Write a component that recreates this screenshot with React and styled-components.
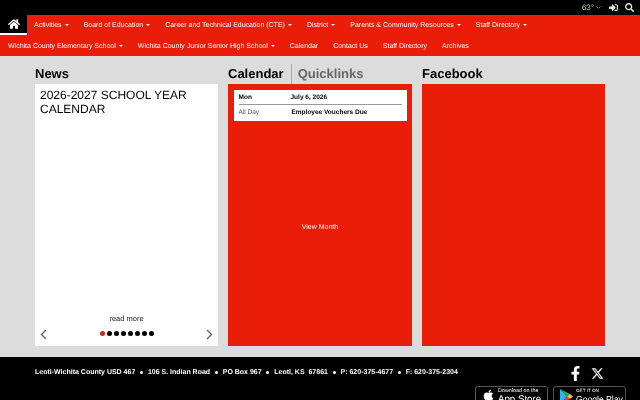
import React from "react";
import styled, { createGlobalStyle, css } from "styled-components";
import { FaHome, FaFacebookF, FaApple, FaSignInAlt, FaSearch } from "react-icons/fa";
import { FaXTwitter } from "react-icons/fa6";
import { LuChevronDown } from "react-icons/lu";

const Global = createGlobalStyle`
  html, body { margin: 0; padding: 0; width: 640px; height: 400px; overflow: hidden; background: #dcdcdc; }
  body { font-family: "Liberation Sans", Arial, sans-serif; text-rendering: geometricPrecision; }
`;
const RED = "#e91d08";
const softText = css`filter: blur(0.2px);`;
const Page = styled.div`width: 640px; height: 400px; overflow: hidden; display: flex; flex-direction: column;`;
const TopBar = styled.div`height: 15px; background: #000; color: #e4e4e4; display: flex; justify-content: flex-end; align-items: center; padding-right: 6px; gap: 7px; font-size: 8px; flex: none;`;
const Temp = styled.span`display: flex; align-items: center; gap: 1px; color: #ccc; ${softText}`;
const Nav = styled.nav`background: ${RED}; height: 41px; flex: none; display: flex; flex-direction: column;`;
const NavRow = styled.div`display: flex; align-items: center; height: ${p => p.$h}px; padding-left: ${p => p.$pad}px;`;
const Home = styled.div`width: 27px; height: 20px; background: #000; border-bottom: 2px solid #fff; box-sizing: border-box; color: #fff; display: flex; align-items: center; justify-content: center; font-size: 12px; margin-right: 7px; flex: none;`;
const NavItem = styled.span`color: #fff; font-size: 7px; white-space: nowrap; margin-right: 15px; padding-top: 1px; ${softText}`;
const Caret = styled.span`display: inline-block; margin-left: 3px; vertical-align: middle; border-top: 2px solid currentColor; border-left: 2px solid transparent; border-right: 2px solid transparent;`;
const Main = styled.main`height: 301px; flex: none; padding: 8px 35px 0; box-sizing: border-box; display: grid; grid-template-columns: 183px 184px 183px; column-gap: 10px; background: #dcdcdc;`;
const Col = styled.section`display: flex; flex-direction: column;`;
const Heading = styled.h2`margin: 0; height: 20px; font-size: 13px; line-height: 20px; font-weight: 700; color: #000; display: flex; align-items: center; ${softText}`;
const HeadingMuted = styled.span`color: #666; border-left: 1px solid #aaa; margin-left: 7px; padding-left: 6px;`;
const NewsPanel = styled.div`height: 262px; background: #fff; position: relative; display: flex; flex-direction: column; align-items: center;`;
const NewsTitle = styled.div`align-self: stretch; padding: 5px 5px 0; font-size: 12px; line-height: 13.5px; color: #000; ${softText}`;
const Spacer = styled.div`flex: 1;`;
const ReadMore = styled.div`font-size: 7.5px; color: #222; margin-bottom: 8px; ${softText}`;
const Dots = styled.div`display: flex; gap: 2px; margin-bottom: 10px;`;
const Dot = styled.span`width: 5px; height: 5px; border-radius: 50%; background: ${p => p.$on ? "#c8281a" : "#000"};`;
const Arrow = styled.svg`position: absolute; bottom: 6px; ${p => p.$side}: 5px; width: 7px; height: 11px;`;
const RedPanel = styled.div`height: 262px; background: ${RED}; display: flex; flex-direction: column; padding: 6px 5.5px 0; box-sizing: border-box;`;
const CalCard = styled.div`background: #fff; height: 31px; padding: 0 5px; display: flex; flex-direction: column; flex: none;`;
const CalRow = styled.div`display: grid; grid-template-columns: ${p => p.$first}px 1fr; align-items: center; height: ${p => p.$h}px; font-size: 6.5px; color: #000; ${p => p.$line ? "border-bottom: 1px solid #999; padding-top: 1px;" : "padding-bottom: 2px;"} box-sizing: border-box;`;
const Strong = styled.span`font-weight: 700; ${softText}`;
const Muted = styled.span`color: #555; ${softText}`;
const ViewMonth = styled.div`flex: 1; display: flex; align-items: center; justify-content: center; color: #fff; font-size: 7px; padding-bottom: 13px;`;
const ViewLabel = styled.span`${softText}`;
const Footer = styled.footer`flex: 1; background: #000; position: relative; padding: 0 35px;`;
const FooterLine = styled.div`color: #fff; font-size: 7px; font-weight: 700; white-space: pre; padding-top: 12px; display: flex; align-items: center; gap: 4.8px; ${softText}`;
const Sep = styled.span`width: 3px; height: 3px; border-radius: 50%; background: #fff; flex: none;`;
const Social = styled.div`position: absolute; top: 9px; left: 568px; display: flex; align-items: center; gap: 8px; color: #fff;`;
const Badges = styled.div`position: absolute; top: 29px; left: 475px; display: flex; gap: 5px;`;
const Badge = styled.div`width: 73px; height: 24px; border: 1px solid #555; border-radius: 3px; box-sizing: border-box; display: flex; gap: ${p => p.$gap}px; padding: 2px 0 0 6px; color: #fff;`;
const BadgeText = styled.div`display: flex; flex-direction: column; line-height: 1; ${softText}`;
const BadgeSmall = styled.span`font-size: ${p => p.$size}px; margin-bottom: 1px; white-space: nowrap;`;
const BadgeBig = styled.span`font-size: ${p => p.$size}px; white-space: nowrap;`;

const nav1 = ["Activities", "Board of Education", "Career and Technical Education (CTE)", "District", "Parents & Community Resources", "Staff Directory"];
const nav2 = [["Wichita County Elementary School", 1], ["Wichita County Junior Senior High School", 1], ["Calendar"], ["Contact Us"], ["Staff Directory"], ["Archives"]];
const foot = ["Leoti-Wichita County USD 467", "106 S. Indian Road", "PO Box 967", "Leoti, KS  67861", "P: 620-375-4677", "F: 620-375-2304"];

export default function App() {
  return (
    <Page>
      <Global />
      <TopBar>
        <Temp>63°<LuChevronDown size={7} /></Temp>
        <FaSignInAlt size={9} />
        <FaSearch size={9} />
      </TopBar>
      <Nav>
        <NavRow $h={20} $pad={0}>
          <Home><FaHome /></Home>
          {nav1.map(n => <NavItem key={n}>{n}<Caret /></NavItem>)}
        </NavRow>
        <NavRow $h={21} $pad={8}>
          {nav2.map(([n, c]) => <NavItem key={n}>{n}{c && <Caret />}</NavItem>)}
        </NavRow>
      </Nav>
      <Main>
        <Col>
          <Heading>News</Heading>
          <NewsPanel>
            <NewsTitle>2026-2027 SCHOOL YEAR CALENDAR</NewsTitle>
            <Spacer />
            <ReadMore>read more</ReadMore>
            <Dots>{[1,0,0,0,0,0,0,0].map((d, i) => <Dot key={i} $on={d} />)}</Dots>
            <Arrow $side="left" viewBox="0 0 7 11"><path d="M6 1L1.5 5.5L6 10" fill="none" stroke="#666" strokeWidth="1.4" /></Arrow>
            <Arrow $side="right" viewBox="0 0 7 11"><path d="M1 1L5.5 5.5L1 10" fill="none" stroke="#666" strokeWidth="1.4" /></Arrow>
          </NewsPanel>
        </Col>
        <Col>
          <Heading>Calendar<HeadingMuted>Quicklinks</HeadingMuted></Heading>
          <RedPanel>
            <CalCard>
              <CalRow $h={15} $first={52} $line><Strong>Mon</Strong><Strong>July 6, 2026</Strong></CalRow>
              <CalRow $h={16} $first={53}><Muted>All Day</Muted><Strong>Employee Vouchers Due</Strong></CalRow>
            </CalCard>
            <ViewMonth><ViewLabel>View Month</ViewLabel></ViewMonth>
          </RedPanel>
        </Col>
        <Col>
          <Heading>Facebook</Heading>
          <RedPanel />
        </Col>
      </Main>
      <Footer>
        <FooterLine>{foot.flatMap((t, i) => i ? [<Sep key={"s" + i} />, <span key={t}>{t}</span>] : [<span key={t}>{t}</span>])}</FooterLine>
        <Social><FaFacebookF size={15} /><FaXTwitter size={13} /></Social>
        <Badges>
          <Badge $gap={3}>
            <FaApple size={13} />
            <BadgeText><BadgeSmall $size={5.4}>Download on the</BadgeSmall><BadgeBig $size={9.7}>App Store</BadgeBig></BadgeText>
          </Badge>
          <Badge $gap={3}>
            <svg width="13" height="15" viewBox="0 0 13 15"><path d="M0 0V15L7 7.5Z" fill="#29b6f6"/><path d="M0 0L7 7.5L10 5Z" fill="#43a047"/><path d="M0 15L7 7.5L10 10Z" fill="#e53935"/><path d="M10 5L7 7.5L10 10L13 7.5Z" fill="#fbc02d"/></svg>
            <BadgeText><BadgeSmall $size={4.6}>GET IT ON</BadgeSmall><BadgeBig $size={8.6}>Google Play</BadgeBig></BadgeText>
          </Badge>
        </Badges>
      </Footer>
    </Page>
  );
}
